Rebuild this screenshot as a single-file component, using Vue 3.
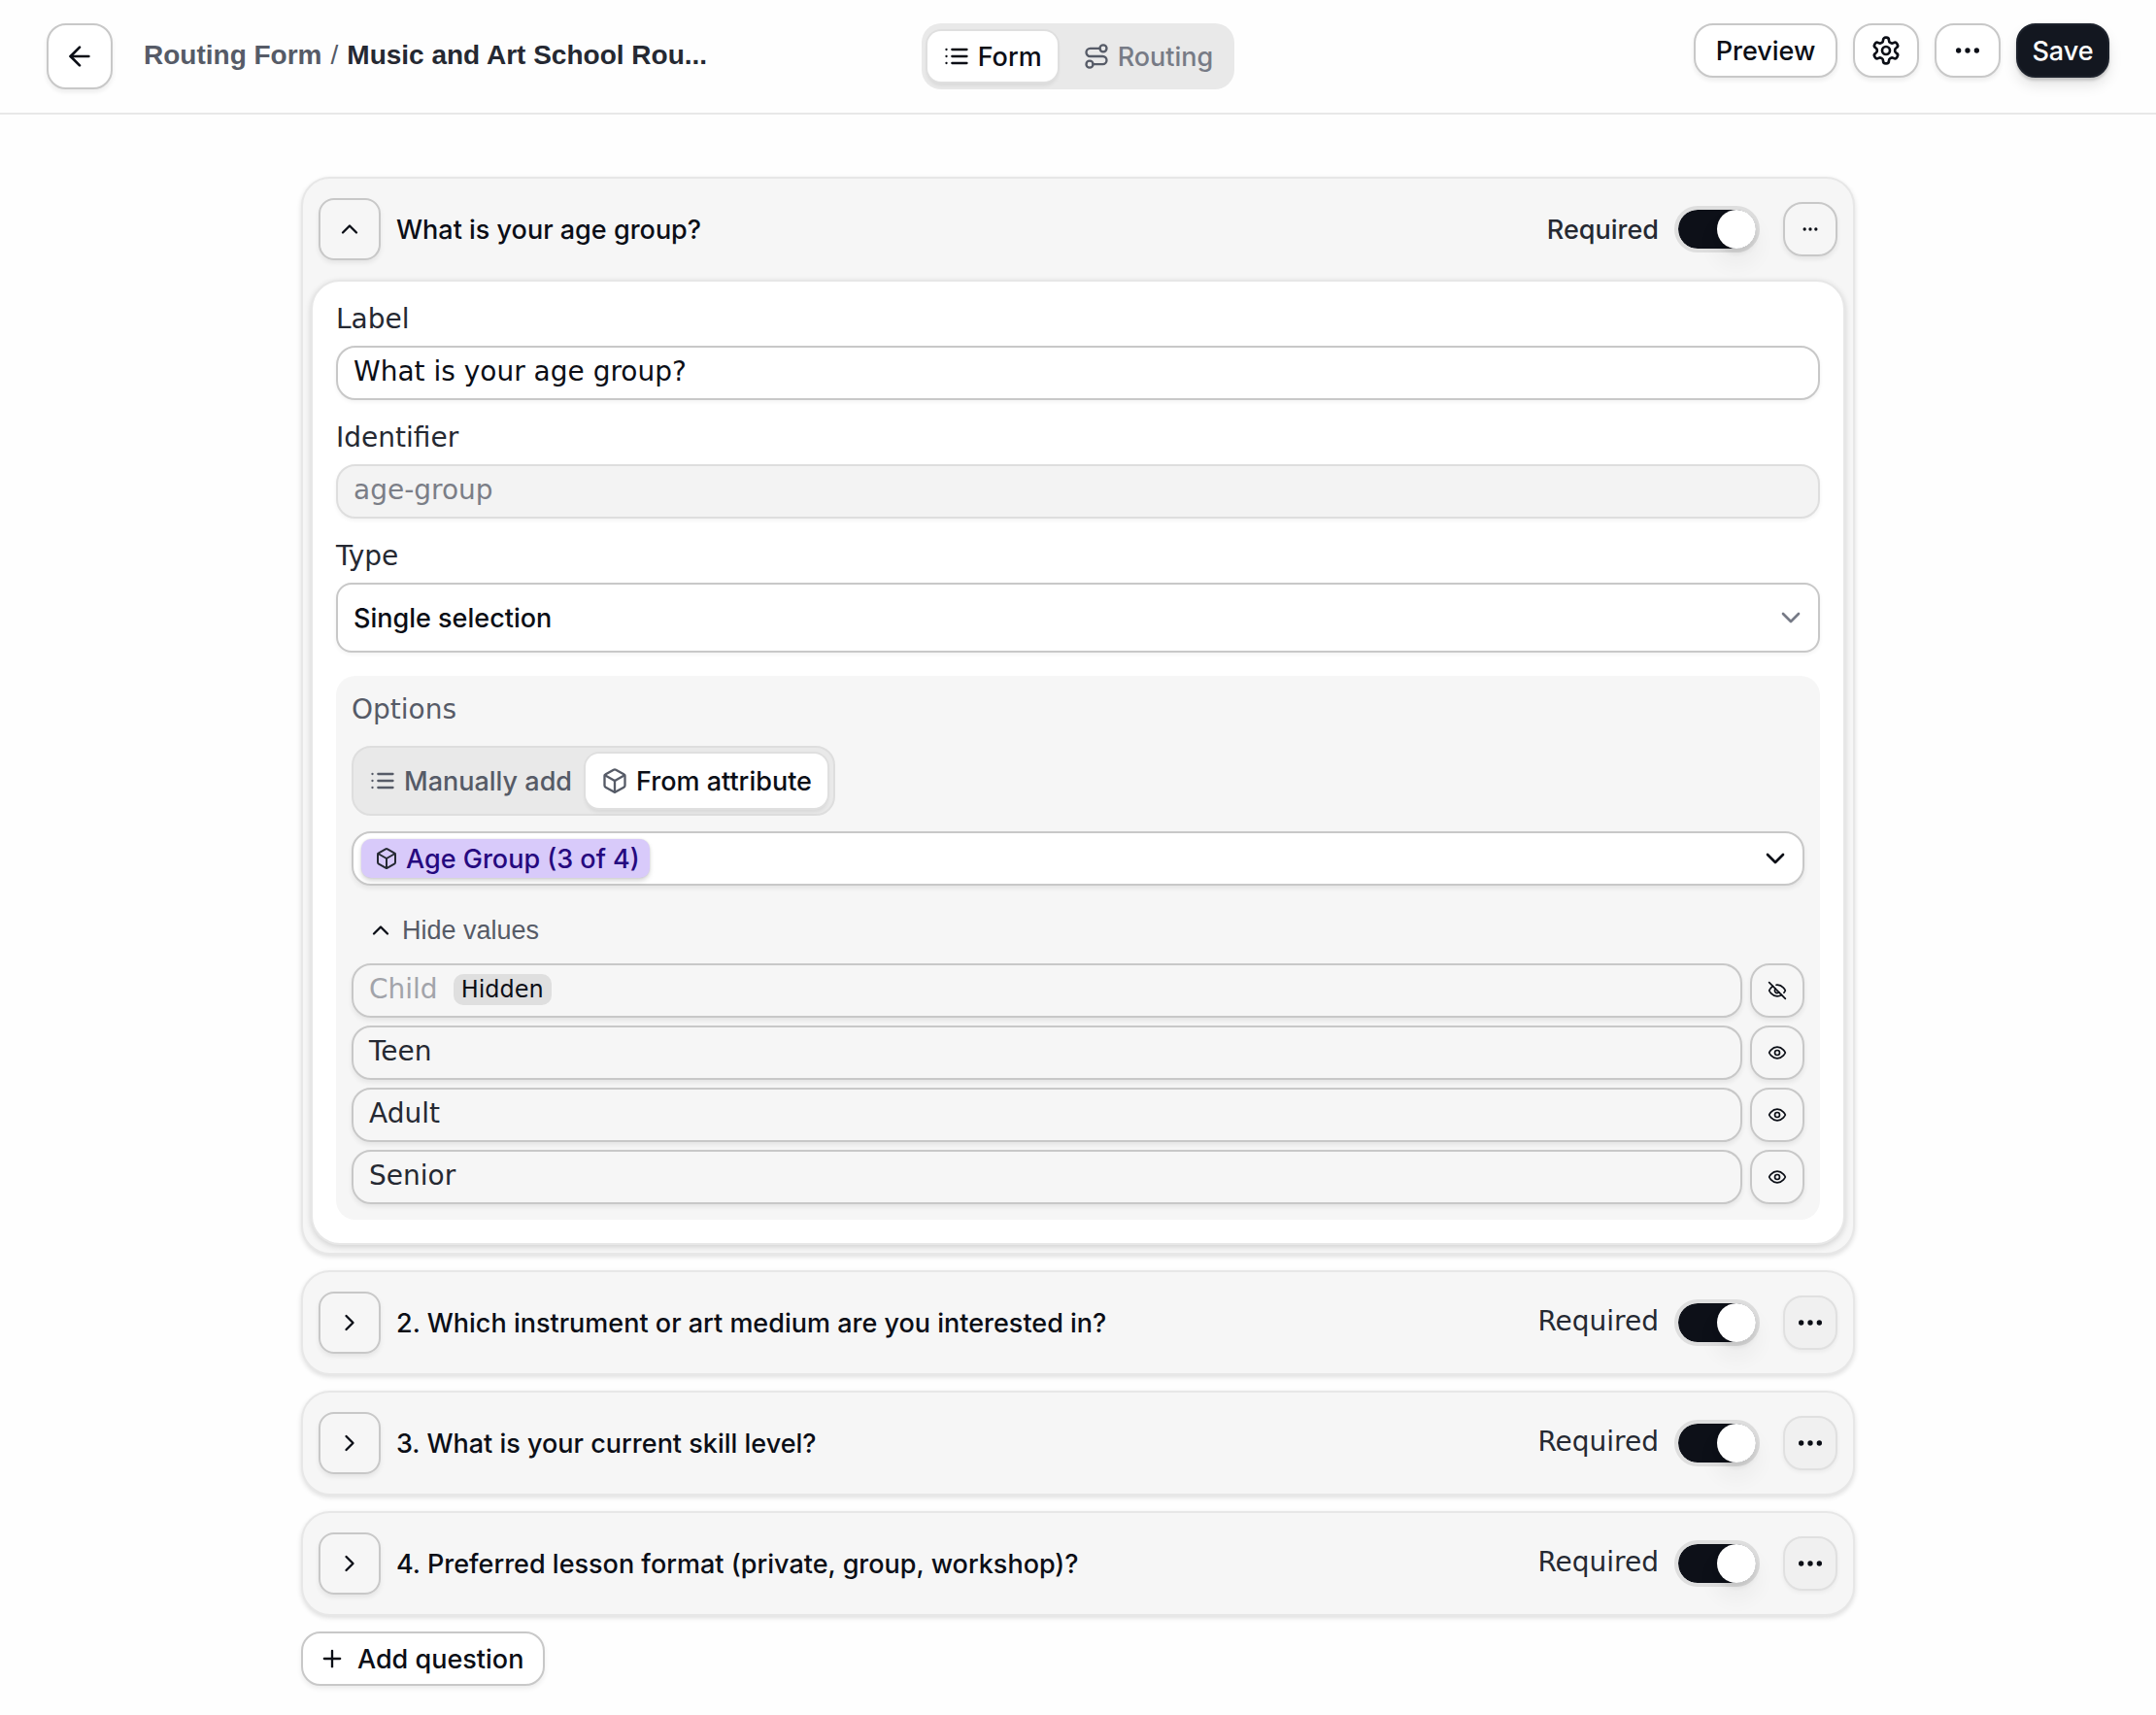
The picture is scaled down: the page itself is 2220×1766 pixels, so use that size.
<script setup>
import { h, ref } from 'vue'

const paths = {
  back: ['m12 19-7-7 7-7', 'M19 12H5'],
  up: ['m18 15-6-6-6 6'],
  right: ['m9 18 6-6-6-6'],
  down: ['m6 9 6 6 6-6'],
  plus: ['M5 12h14', 'M12 5v14'],
  list: ['M8 6h13', 'M8 12h13', 'M8 18h13', 'M3 6h.01', 'M3 12h.01', 'M3 18h.01'],
  route: [
    'M3 19a3 3 0 1 0 6 0a3 3 0 1 0-6 0',
    'M9 19h8.5a3.5 3.5 0 0 0 0-7h-11a3.5 3.5 0 0 1 0-7H15',
    'M15 5a3 3 0 1 0 6 0a3 3 0 1 0-6 0',
  ],
  more: [
    'M4 12a1 1 0 1 0 2 0a1 1 0 1 0-2 0',
    'M11 12a1 1 0 1 0 2 0a1 1 0 1 0-2 0',
    'M18 12a1 1 0 1 0 2 0a1 1 0 1 0-2 0',
  ],
  box: [
    'M21 8a2 2 0 0 0-1-1.73l-7-4a2 2 0 0 0-2 0l-7 4A2 2 0 0 0 3 8v8a2 2 0 0 0 1 1.73l7 4a2 2 0 0 0 2 0l7-4A2 2 0 0 0 21 16Z',
    'm3.3 7 8.7 5 8.7-5',
    'M12 22V12',
  ],
  eye: ['M2 12s3-7 10-7 10 7 10 7-3 7-10 7-10-7-10-7Z', 'M9 12a3 3 0 1 0 6 0a3 3 0 1 0-6 0'],
  eyeOff: [
    'M9.88 9.88a3 3 0 1 0 4.24 4.24',
    'M10.73 5.08A10.43 10.43 0 0 1 12 5c7 0 10 7 10 7a13.16 13.16 0 0 1-1.67 2.68',
    'M6.61 6.61A13.526 13.526 0 0 0 2 12s3 7 10 7a9.74 9.74 0 0 0 5.39-1.61',
    'M2 2l20 20',
  ],
  settings: [
    'M12.22 2h-.44a2 2 0 0 0-2 2v.18a2 2 0 0 1-1 1.73l-.43.25a2 2 0 0 1-2 0l-.15-.08a2 2 0 0 0-2.73.73l-.22.38a2 2 0 0 0 .73 2.73l.15.1a2 2 0 0 1 1 1.72v.51a2 2 0 0 1-1 1.74l-.15.09a2 2 0 0 0-.73 2.73l.22.38a2 2 0 0 0 2.73.73l.15-.08a2 2 0 0 1 2 0l.43.25a2 2 0 0 1 1 1.73V20a2 2 0 0 0 2 2h.44a2 2 0 0 0 2-2v-.18a2 2 0 0 1 1-1.73l.43-.25a2 2 0 0 1 2 0l.15.08a2 2 0 0 0 2.73-.73l.22-.39a2 2 0 0 0-.73-2.73l-.15-.08a2 2 0 0 1-1-1.74v-.5a2 2 0 0 1 1-1.74l.15-.09a2 2 0 0 0 .73-2.73l-.22-.38a2 2 0 0 0-2.73-.73l-.15.08a2 2 0 0 1-2 0l-.43-.25a2 2 0 0 1-1-1.73V4a2 2 0 0 0-2-2z',
    'M9 12a3 3 0 1 0 6 0a3 3 0 1 0-6 0',
  ],
}

const Icon = ({ name, size = 28 }) =>
  h(
    'svg',
    {
      class: 'icon',
      width: size,
      height: size,
      viewBox: '0 0 24 24',
      fill: name === 'more' ? 'currentColor' : 'none',
      stroke: 'currentColor',
      'stroke-width': 2,
      'stroke-linecap': 'round',
      'stroke-linejoin': 'round',
      'aria-hidden': 'true',
    },
    paths[name].map((d) => h('path', { d })),
  )
Icon.props = ['name', 'size']

const label = ref('What is your age group?')
const identifier = ref('age-group')
const type = ref('Single selection')
const firstRequired = ref(true)

const values = ref([
  { name: 'Child', hidden: true },
  { name: 'Teen', hidden: false },
  { name: 'Adult', hidden: false },
  { name: 'Senior', hidden: false },
])

const questions = ref([
  { id: 2, title: 'Which instrument or art medium are you interested in?', required: true },
  { id: 3, title: 'What is your current skill level?', required: true },
  { id: 4, title: 'Preferred lesson format (private, group, workshop)?', required: true },
])
</script>

<template>
  <div class="page">
    <header class="topbar">
      <div class="topbar-left">
        <button type="button" class="btn back" aria-label="Back"><Icon name="back" :size="32" /></button>
        <nav class="crumbs">
          <a href="#" class="crumb-parent">Routing Form</a>
          <span class="crumb-sep">/</span>
          <span class="crumb-current">Music and Art School Rou...</span>
        </nav>
      </div>
      <div class="segment segment-top">
        <button type="button" class="tab active"><Icon name="list" />Form</button>
        <button type="button" class="tab faded"><Icon name="route" class="tab-icon" />Routing</button>
      </div>
      <div class="actions">
        <button type="button" class="btn preview">Preview</button>
        <button type="button" class="btn wide" aria-label="Settings"><Icon name="settings" :size="32" /></button>
        <button type="button" class="btn wide" aria-label="More"><Icon name="more" :size="32" /></button>
        <button type="button" class="btn save">Save</button>
      </div>
    </header>

    <main class="content">
      <section class="card">
        <div class="card-head">
          <button type="button" class="btn toggle-card" aria-label="Collapse"><Icon name="up" /></button>
          <h2 class="card-title">What is your age group?</h2>
          <label class="required strong" for="required-1">Required</label>
          <input id="required-1" v-model="firstRequired" type="checkbox" class="switch" />
          <button type="button" class="btn square" aria-label="More"><Icon name="more" :size="20" /></button>
        </div>

        <div class="panel">
          <div class="field">
            <label for="label">Label</label>
            <input id="label" v-model="label" type="text" class="input" />
          </div>
          <div class="field">
            <label for="identifier">Identifier</label>
            <input id="identifier" v-model="identifier" type="text" class="input" disabled />
          </div>
          <div class="field">
            <label for="type">Type</label>
            <div class="select-wrap">
              <select id="type" v-model="type" class="select">
                <option>Single selection</option>
              </select>
              <Icon name="down" :size="32" class="select-arrow" />
            </div>
          </div>

          <div class="options">
            <h3 class="options-title">Options</h3>
            <div class="segment segment-options">
              <button type="button" class="tab"><Icon name="list" />Manually add</button>
              <button type="button" class="tab active"><Icon name="box" class="tab-icon" />From attribute</button>
            </div>
            <button type="button" class="attribute">
              <span class="chip"><Icon name="box" :size="24" class="chip-icon" />Age Group (3 of 4)</span>
              <Icon name="down" :size="32" />
            </button>
            <button type="button" class="hide-values"><Icon name="up" class="hide-icon" />Hide values</button>
            <ul class="values">
              <li v-for="value in values" :key="value.name" class="value">
                <div class="value-box" :class="{ muted: value.hidden }">
                  <span>{{ value.name }}</span>
                  <span v-if="value.hidden" class="badge">Hidden</span>
                </div>
                <button
                  type="button"
                  class="btn square"
                  :aria-label="value.hidden ? 'Show value' : 'Hide value'"
                  @click="value.hidden = !value.hidden"
                >
                  <Icon :name="value.hidden ? 'eyeOff' : 'eye'" :size="20" />
                </button>
              </li>
            </ul>
          </div>
        </div>
      </section>

      <section v-for="q in questions" :key="q.id" class="card collapsed">
        <div class="card-head">
          <button type="button" class="btn toggle-card" aria-label="Expand"><Icon name="right" /></button>
          <h2 class="card-title">{{ q.id }}. {{ q.title }}</h2>
          <label class="required" :for="`required-${q.id}`">Required</label>
          <input :id="`required-${q.id}`" v-model="q.required" type="checkbox" class="switch" />
          <button type="button" class="btn square soft" aria-label="More"><Icon name="more" :size="32" /></button>
        </div>
      </section>

      <button type="button" class="btn add"><Icon name="plus" />Add question</button>
    </main>
  </div>
</template>

<style>
body {
  background: #fefefe;
}
</style>

<style scoped>
* {
  box-sizing: border-box;
}

.page {
  --ui: Inter, "Liberation Sans", sans-serif;
  --form: "DejaVu Sans", sans-serif;
  --plain: "Liberation Sans", Arial, sans-serif;
  --ink: #0b0e16;
  --text: #252932;
  --subtle: #565b67;
  --line: #c8c8c8;
  --line-soft: #e7e7e7;
  --drop: 0 3px 5px rgba(0, 0, 0, 0.07);
  color: var(--ink);
  font: 500 27px/33px var(--ui);
}

button,
input,
select {
  margin: 0;
  color: inherit;
  font: inherit;
}

button {
  cursor: pointer;
}

h2,
h3,
ul {
  margin: 0;
  padding: 0;
  font: inherit;
  list-style: none;
}

.icon {
  display: block;
  flex: none;
}

.topbar {
  display: grid;
  grid-template-columns: 1fr auto 1fr;
  align-items: start;
  padding: 24px 48px;
  border-bottom: 2px solid #e8e8e8;
}

.topbar-left {
  display: flex;
  align-items: center;
  gap: 32px;
}

.crumbs {
  display: flex;
  gap: 9px;
  padding-bottom: 2px;
  font: 700 28px/32px var(--plain);
  white-space: nowrap;
}

.crumb-parent {
  color: var(--subtle);
  text-decoration: none;
}

.crumb-sep {
  color: var(--subtle);
  font-weight: 400;
}

.crumb-current {
  color: var(--text);
}

.btn {
  display: inline-flex;
  flex: none;
  align-items: center;
  justify-content: center;
  height: 56px;
  padding: 0;
  border: 2px solid var(--line);
  border-radius: 20px;
  background: transparent;
  box-shadow: var(--drop);
}

.back {
  width: 68px;
  height: 68px;
  background: #fff;
}

.actions {
  display: flex;
  justify-content: flex-end;
  gap: 16px;
}

.actions .btn {
  background: #fff;
}

.preview {
  width: 148px;
}

.wide {
  width: 68px;
}

.actions .save {
  width: 96px;
  border-color: #1c212b;
  background: #131720;
  color: #fff;
  box-shadow: 0 3px 3px rgba(0, 0, 0, 0.16), 0 8px 14px rgba(0, 0, 0, 0.1);
}

.segment {
  display: flex;
  background: #e9e9e9;
  border-radius: 20px;
}

.segment-top {
  gap: 10px;
  height: 68px;
  padding: 8px 6px;
}

.segment-options {
  gap: 4px;
  width: max-content;
  height: 72px;
  padding: 6px;
  border: 2px solid #dedede;
}

.tab {
  display: flex;
  align-items: center;
  gap: 8px;
  padding: 0 10px;
  border: 0;
  border-radius: 14px;
  background: transparent;
  color: var(--subtle);
  white-space: nowrap;
}

.tab.faded {
  padding: 0 16px;
  color: #777b86;
}

.tab.active {
  padding: 0 16px;
  background: #fff;
  color: var(--ink);
  box-shadow: 0 0 0 2px #dfdfdf, 0 4px 4px rgba(0, 0, 0, 0.08);
}

.tab-icon {
  color: #565b67;
}

.content {
  display: flex;
  flex-direction: column;
  gap: 16px;
  width: 100%;
  max-width: 1600px;
  margin: 0 auto;
  padding: 64px 0 28px;
}

.card {
  padding: 0 8px 8px;
  border: 2px solid var(--line-soft);
  border-radius: 30px;
  background: #f6f6f6;
  box-shadow: 0 2px 5px rgba(0, 0, 0, 0.13);
}

.collapsed {
  padding-bottom: 0;
}

.card-head {
  display: flex;
  align-items: center;
  height: 104px;
  padding: 0 8px;
}

.toggle-card {
  width: 64px;
  height: 64px;
  margin-right: 16px;
  border-radius: 16px;
}

.card-title {
  flex: 1;
}

.required {
  padding-bottom: 2px;
  color: var(--text);
  font: 400 28px/32px var(--form);
}

.required.strong {
  padding-bottom: 0;
  font: 500 27px/33px var(--ui);
}

.switch {
  flex: none;
  width: 88px;
  height: 48px;
  margin: 0 24px 0 16px;
  border: 4px solid #dedede;
  border-radius: 24px;
  appearance: none;
  background: #b9bcc4;
  cursor: pointer;
}

.switch::before {
  display: block;
  width: 40px;
  height: 40px;
  border-radius: 50%;
  background: #fff;
  box-shadow: 0 4px 6px rgba(0, 0, 0, 0.1), 0 14px 18px 6px rgba(0, 0, 0, 0.03);
  content: "";
}

.switch:checked {
  background: #0d1018 padding-box;
}

.switch:checked::before {
  margin-left: 40px;
}

.square {
  width: 56px;
}

.soft {
  border-color: #e0e0e0;
  background: #f0f0f0;
  box-shadow: 0 2px 4px rgba(0, 0, 0, 0.05);
}

.panel {
  display: flex;
  flex-direction: column;
  gap: 24px;
  padding: 24px;
  border: 2px solid var(--line-soft);
  border-radius: 30px;
  background: #fff;
  box-shadow: 0 2px 6px rgba(0, 0, 0, 0.15);
}

.field {
  display: flex;
  flex-direction: column;
  gap: 12px;
  color: var(--text);
  font: 400 28px/30px var(--form);
}

.input {
  width: 100%;
  height: 56px;
  padding: 0 16px 4px;
  border: 2px solid var(--line);
  border-radius: 20px;
  background: #fff;
  color: var(--ink);
  box-shadow: 0 2px 4px rgba(0, 0, 0, 0.05);
}

.input:disabled {
  border-color: #dedede;
  background: #f3f3f3;
  color: #7b7e87;
}

.select-wrap {
  display: grid;
  align-items: center;
}

.select-wrap > * {
  grid-area: 1 / 1;
}

.select {
  width: 100%;
  height: 72px;
  padding: 0 56px 0 16px;
  border: 2px solid var(--line);
  border-radius: 16px;
  appearance: none;
  background: #fff;
  color: var(--ink);
  font: 500 27px/33px var(--ui);
  box-shadow: 0 2px 4px rgba(0, 0, 0, 0.05);
}

.select-arrow {
  justify-self: end;
  margin-right: 14px;
  color: #767a86;
  pointer-events: none;
}

.options {
  padding: 20px 16px 16px;
  border-radius: 20px;
  background: #f6f6f6;
}

.options-title {
  margin-bottom: 22px;
  color: var(--subtle);
  font: 400 28px/30px var(--form);
}

.attribute {
  display: flex;
  align-items: center;
  justify-content: space-between;
  width: 100%;
  height: 56px;
  margin: 16px 0 32px;
  padding: 0 12px 0 8px;
  border: 2px solid var(--line);
  border-radius: 20px;
  background: #fff;
  box-shadow: var(--drop);
}

.chip {
  display: flex;
  align-items: center;
  gap: 8px;
  height: 40px;
  padding: 0 10px 0 14px;
  border-radius: 10px;
  background: #d8cafa;
  color: #26097f;
  box-shadow: 0 0 2px rgba(0, 0, 0, 0.12), 0 3px 5px rgba(0, 0, 0, 0.16);
}

.chip-icon {
  color: var(--text);
}

.hide-values {
  display: flex;
  align-items: center;
  gap: 8px;
  margin-bottom: 20px;
  padding: 0 16px;
  border: 0;
  background: transparent;
  color: var(--subtle);
  font: 400 27px/28px var(--plain);
}

.hide-icon {
  color: var(--ink);
}

.values {
  display: grid;
  gap: 8px;
}

.value {
  display: flex;
  gap: 8px;
}

.value-box {
  display: flex;
  flex: 1;
  align-items: center;
  gap: 16px;
  height: 56px;
  padding: 0 16px 2px;
  border: 2px solid var(--line);
  border-radius: 20px;
  color: var(--text);
  font: 400 28px/32px var(--form);
  box-shadow: var(--drop);
}

.value-box.muted {
  color: #a2a4aa;
}

.badge {
  padding: 0 8px;
  border-radius: 10px;
  background: #dfdfdf;
  color: var(--ink);
  font-size: 24px;
}

.add {
  align-self: flex-start;
  gap: 12px;
  padding: 0 20px 0 16px;
  background: #fff;
}
</style>
